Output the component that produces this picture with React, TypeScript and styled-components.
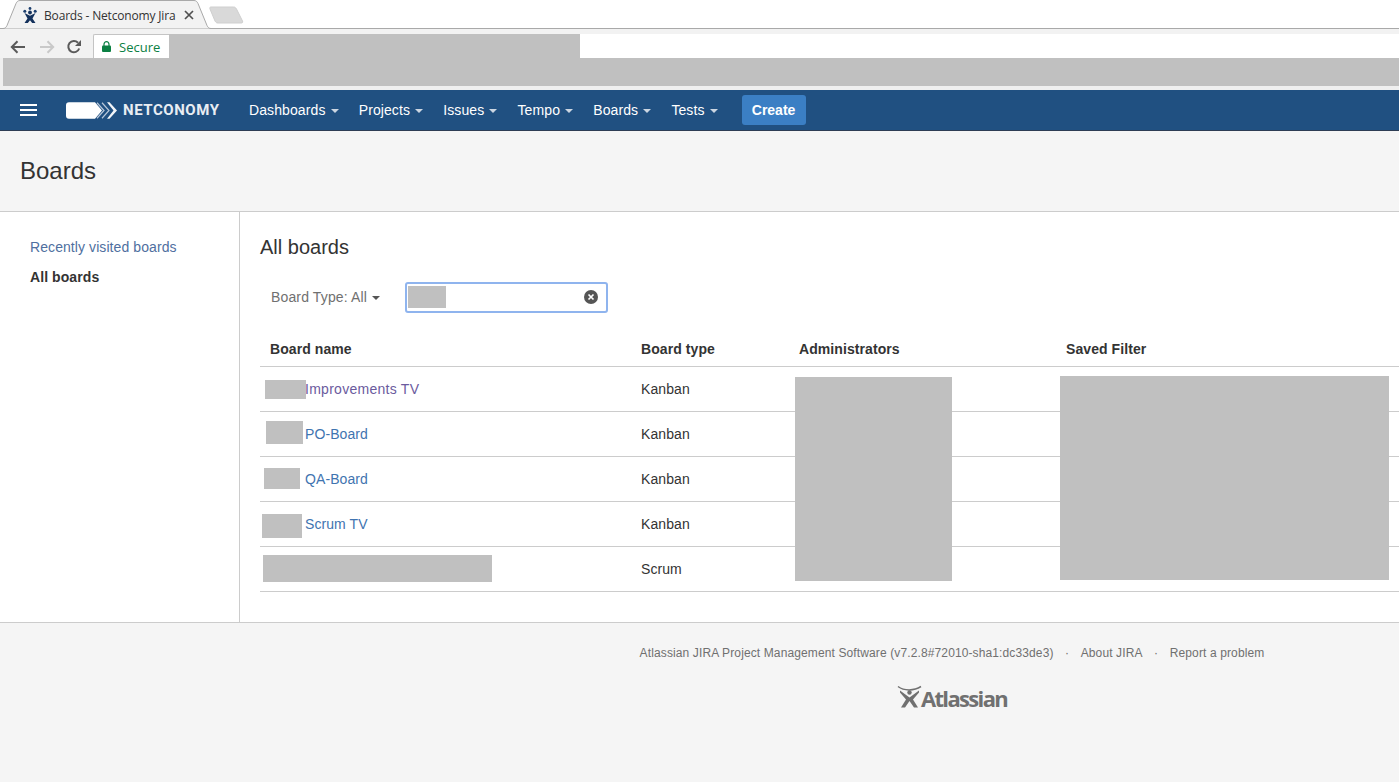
import React from "react";
import styled, { createGlobalStyle } from "styled-components";

const Global = createGlobalStyle`
  html, body { margin: 0; padding: 0; height: 100%; overflow: hidden; background: #fff; }
  body { font-family: "Liberation Sans", Arial, sans-serif; font-size: 14px; color: #333; }
  * { box-sizing: border-box; }
`;

const Page = styled.div`
  width: 1399px; height: 782px; display: flex; flex-direction: column; overflow: hidden;
`;

/* ---- browser chrome ---- */
const TabStrip = styled.div`
  height: 29px; background: #fff; border-bottom: 1px solid #a9a9a9; display: flex; align-items: flex-end; flex: none;
`;
const Tab = styled.div`
  position: relative; width: 212px; height: 29px; display: flex; align-items: center; padding: 1px 0 0 23px; font-family: "Open Sans", "Noto Sans", sans-serif; font-size: 12px; color: #333; margin-bottom: -1px; flex: none;
`;
const TabShape = styled.svg`
  position: absolute; left: 0; top: 0; z-index: 0;
`;
const TabIcon = styled.svg`
  position: relative; flex: none; margin-right: 7px;
`;
const TabTitle = styled.span`
  position: relative; white-space: nowrap; width: 140px; flex: none; letter-spacing: -0.17px;
`;
const TabClose = styled.svg`
  position: relative; flex: none;
`;
const NewTab = styled.svg`
  flex: none; margin: 0 0 4px -3px;
`;
const AddressRow = styled.div`
  height: 29px; background: #f2f2f2; display: flex; align-items: flex-end; flex: none;
`;
const NavIcons = styled.div`
  width: 93px; height: 29px; display: flex; align-items: center; gap: 9px; padding: 6px 0 0 9px; flex: none;
`;
const ReloadIcon = styled.svg`
  margin-left: 1px; flex: none;
`;
const SecureChip = styled.div`
  width: 76px; height: 24px; background: #fff; border: 1px solid #c4c4c4; border-bottom: 0; border-right: 0; border-radius: 2px 0 0 0; display: flex; align-items: center; gap: 8px; padding-left: 8px; color: #0b8043; font-family: "Open Sans", "Noto Sans", sans-serif; font-size: 13px; flex: none;
`;
const UrlRedaction = styled.div`
  width: 411px; height: 24px; background: #c0c0c0; flex: none;
`;
const UrlRest = styled.div`
  flex: 1; height: 24px; background: #fff;
`;
const BookmarkRow = styled.div`
  height: 32px; flex: none; background: #efefef; padding: 0 0 4px 3px;
`;
const BookmarkRedaction = styled.div`
  height: 28px; background: #c0c0c0;
`;

/* ---- jira header ---- */
const Header = styled.header`
  height: 41px; flex: none; background: #205081; border-bottom: 1px solid #2e3d54; display: flex; align-items: center; color: #fff;
`;
const Burger = styled.div`
  width: 17px; height: 12px; margin: 0 0 0 20px; border-top: 2px solid #fff; border-bottom: 2px solid #fff; position: relative; flex: none;
  &::after { content: ""; position: absolute; left: 0; right: 0; top: 3px; height: 2px; background: #fff; }
`;
const Brand = styled.div`
  display: flex; align-items: center; margin-left: 29px; width: 183px; flex: none;
`;
const BrandName = styled.span`
  margin-left: 6px; font-family: Roboto, "Liberation Sans", sans-serif; font-weight: 700; font-size: 15px; letter-spacing: 0.55px; color: #e8edf3;
`;
const NavList = styled.nav`
  display: flex; align-items: center; gap: 20.2px;
`;
const NavItem = styled.span`
  display: flex; align-items: center; gap: 5px; font-size: 14px; letter-spacing: 0.1px; color: #fff;
  &::after { content: ""; border-left: 4px solid transparent; border-right: 4px solid transparent; border-top: 4px solid #ccd6e2; margin-top: 1px; }
`;
const CreateButton = styled.button`
  margin-left: 24px; width: 64px; height: 30px; background: #3b7fc4; border: 0; border-radius: 3px; color: #fff; font: 700 14px "Liberation Sans", Arial, sans-serif; padding: 0;
`;

/* ---- page ---- */
const PageHead = styled.div`
  height: 81px; flex: none; background: #f5f5f5; border-bottom: 1px solid #ccc; display: flex; align-items: center; padding: 0 0 1px 20px;
`;
const PageTitle = styled.h1`
  margin: 0; font-size: 24px; font-weight: 400; color: #333;
`;
const Body = styled.div`
  display: flex; height: 411px; flex: none; border-bottom: 1px solid #ccc; letter-spacing: 0.08px;
`;
const Side = styled.aside`
  width: 240px; flex: none; border-right: 1px solid #ccc; padding: 28px 0 0 30px; display: flex; flex-direction: column; gap: 15px;
`;
const SideLink = styled.a<{ $active?: boolean }>`
  font-size: 14px; line-height: 15px; color: ${p => (p.$active ? "#333" : "#4f6fa0")}; font-weight: ${p => (p.$active ? 700 : 400)};
`;
const Main = styled.main`
  flex: 1; padding: 23px 0 0 20px; min-width: 0;
`;
const SectionTitle = styled.h2`
  margin: 0; font-size: 20px; line-height: 24px; font-weight: 400; letter-spacing: 0; color: #333;
`;
const Filters = styled.div`
  display: flex; align-items: center; height: 32px; margin-top: 22px; padding-left: 11px;
`;
const TypeFilter = styled.span`
  display: flex; align-items: center; gap: 5px; width: 134px; color: #707070; font-size: 14px; letter-spacing: 0.14px;
  &::after { content: ""; border-left: 4px solid transparent; border-right: 4px solid transparent; border-top: 4px solid #555; margin-top: 1px; }
`;
const SearchBox = styled.div`
  position: relative; width: 203px; height: 31px; border: 2px solid #8fb4ee; border-radius: 3px; background: #fff; display: flex; align-items: center; justify-content: flex-end; padding-right: 8px;
`;
const SearchRedaction = styled.div`
  position: absolute; left: 1px; top: 2px; width: 38px; height: 22px; background: #c0c0c0;
`;
const TableWrap = styled.div`
  position: relative; margin-top: 19px;
`;
const Row = styled.div<{ $head?: boolean }>`
  display: grid; grid-template-columns: 371px 158px 267px 1fr; height: ${p => (p.$head ? 35 : 45)}px; border-bottom: 1px solid #ccc; align-items: center; font-weight: ${p => (p.$head ? 700 : 400)}; color: #333;
`;
const Cell = styled.div`
  padding-left: 10px; position: relative; white-space: nowrap;
`;
const NameCell = styled(Cell)`
  padding-left: 45px;
`;
const BoardLink = styled.a<{ $visited?: boolean }>`
  color: ${p => (p.$visited ? "#6b5b9e" : "#3f74b0")};
  letter-spacing: ${p => (p.$visited ? 0.27 : 0.08)}px;
`;
const Redaction = styled.div<{ $l: number; $t: number; $w: number; $h: number }>`
  position: absolute; background: #c0c0c0; left: ${p => p.$l}px; top: ${p => p.$t}px; width: ${p => p.$w}px; height: ${p => p.$h}px;
`;

/* ---- footer ---- */
const Footer = styled.footer`
  flex: 1; background: #f5f5f5; display: flex; flex-direction: column; align-items: center; padding: 22px 0 0 505px; color: #707070; font-size: 12px;
`;
const FooterLinks = styled.div`
  display: flex; gap: 11.5px; line-height: 16px; letter-spacing: 0.12px;
  & > span { white-space: nowrap; }
`;
const AtlassianLogo = styled.div`
  display: flex; align-items: flex-end; margin-top: 21px; color: #707070; height: 28px;
`;
const AtlassianText = styled.span`
  font-family: "Open Sans", "Liberation Sans", sans-serif; font-weight: 700; font-size: 22px; line-height: 24px; letter-spacing: -1.65px; margin-left: -2px;
`;

const Back = ({ color, flip }: { color: string; flip?: boolean }) => (
  <svg width="19" height="16" viewBox="0 0 19 16" style={flip ? { transform: "scaleX(-1)" } : undefined}>
    <path d="M16 8H3M8.5 2.2 2.8 8l5.700 5.800" fill="none" stroke={color} strokeWidth="2" />
  </svg>
);

const boards = [
  { name: "Improvements TV", type: "Kanban", visited: true, r: { l: 5, t: -1, w: 41, h: 19 } },
  { name: "PO-Board", type: "Kanban", r: { l: 6, t: -5, w: 37, h: 23 } },
  { name: "QA-Board", type: "Kanban", r: { l: 4, t: -3, w: 36, h: 21 } },
  { name: "Scrum TV", type: "Kanban", r: { l: 2, t: -2, w: 40, h: 24 } },
  { name: "\u00a0", type: "Scrum", r: { l: 3, t: -6, w: 229, h: 27 } },
];

export default function App() {
  return (
    <Page>
      <Global />
      <TabStrip>
        <Tab>
          <TabShape width="212" height="29" viewBox="0 0 212 29">
            <path d="M0 28.500h3c2 0 3-1 4-3L16 3.500C17 1.500 18 .5 20 .5h174c2 0 3 1 4 3l9 22c1 2 2 3 4 3h1" fill="#f2f2f2" stroke="#a9a9a9" />
          </TabShape>
          <TabIcon width="14" height="16" viewBox="0 0 14 16">
            <circle cx="1.800" cy="4.200" r="1.500" fill="#1d3f6e" />
            <circle cx="12.200" cy="4.200" r="1.500" fill="#1d3f6e" />
            <circle cx="7" cy="1.500" r="1.400" fill="#1d3f6e" />
            <circle cx="7" cy="5.500" r="1.900" fill="#14315c" />
            <path d="M1.500 6 7 8.800 12.500 6 9.500 11.500 12.500 16H9.200L7 13.200 4.800 16H1.500l3-4.500z" fill="#14315c" />
          </TabIcon>
          <TabTitle>Boards - Netconomy Jira</TabTitle>
          <TabClose width="10" height="10" viewBox="0 0 10 10">
            <path d="M1 1l8 8M9 1L1 9" stroke="#505050" strokeWidth="1.700" />
          </TabClose>
        </Tab>
        <NewTab width="36" height="18" viewBox="0 0 36 18">
          <path d="M1.500 1h23c1.500 0 2 .5 3 2l6 12c.5 1.500 0 2-1.500 2H9c-1.500 0-2-.5-3-2L1 3c-.5-1 0-2 .5-2z" fill="#d9d9d9" stroke="#cfcfcf" />
        </NewTab>
      </TabStrip>
      <AddressRow>
        <NavIcons>
          <Back color="#5a5a5a" />
          <Back color="#c9c9c9" flip />
          <ReloadIcon width="16" height="16" viewBox="0 0 16 16">
            <path d="M13.200 9.500A5.600 5.600 0 1 1 12 3.800" fill="none" stroke="#5a5a5a" strokeWidth="2" />
            <path d="M15 1v6H9z" fill="#5a5a5a" />
          </ReloadIcon>
        </NavIcons>
        <SecureChip>
          <svg width="9" height="11" viewBox="0 0 9 11">
            <path d="M2 5V3.200a2.500 2.500 0 0 1 5 0V5" fill="none" stroke="#0b8043" strokeWidth="1.200" />
            <rect x="0" y="4.500" width="9" height="6.500" rx="1" fill="#0b8043" />
          </svg>
          Secure
        </SecureChip>
        <UrlRedaction />
        <UrlRest />
      </AddressRow>
      <BookmarkRow>
        <BookmarkRedaction />
      </BookmarkRow>
      <Header>
        <Burger />
        <Brand>
          <svg width="51" height="17" viewBox="0 0 51 17">
            <path d="M3 .25H29L36 8.500 29 16.750H3a3 3 0 0 1-3-3V3.250a3 3 0 0 1 3-3z" fill="#fff" />
            <path d="M31 .75 38 8.500 31 16.250M36 .75 43 8.500 36 16.250" fill="none" stroke="#b9c8da" strokeWidth="1.200" />
            <path d="M41 .25h2.500L51 8.500l-7.500 8.250H41l6.500-8.250z" fill="#f2f5f8" />
          </svg>
          <BrandName>NETCONOMY</BrandName>
        </Brand>
        <NavList>
          {["Dashboards", "Projects", "Issues", "Tempo", "Boards", "Tests"].map(n => (
            <NavItem key={n}>{n}</NavItem>
          ))}
        </NavList>
        <CreateButton>Create</CreateButton>
      </Header>
      <PageHead>
        <PageTitle>Boards</PageTitle>
      </PageHead>
      <Body>
        <Side>
          <SideLink>Recently visited boards</SideLink>
          <SideLink $active>All boards</SideLink>
        </Side>
        <Main>
          <SectionTitle>All boards</SectionTitle>
          <Filters>
            <TypeFilter>Board Type: All</TypeFilter>
            <SearchBox>
              <SearchRedaction />
              <svg width="14" height="14" viewBox="0 0 14 14">
                <circle cx="7" cy="7" r="7" fill="#555" />
                <path d="M4.500 4.500l5 5M9.500 4.500l-5 5" stroke="#fff" strokeWidth="1.700" />
              </svg>
            </SearchBox>
          </Filters>
          <TableWrap>
            <Row $head>
              <Cell>Board name</Cell>
              <Cell>Board type</Cell>
              <Cell>Administrators</Cell>
              <Cell>Saved Filter</Cell>
            </Row>
            {boards.map(b => (
              <Row key={b.type + b.name}>
                <NameCell>
                  <Redaction $l={b.r.l} $t={b.r.t} $w={b.r.w} $h={b.r.h} />
                  <BoardLink $visited={b.visited}>{b.name}</BoardLink>
                </NameCell>
                <Cell>{b.type}</Cell>
                <Cell />
                <Cell />
              </Row>
            ))}
            <Redaction $l={535} $t={45} $w={157} $h={204} />
            <Redaction $l={800} $t={44} $w={329} $h={204} />
          </TableWrap>
        </Main>
      </Body>
      <Footer>
        <FooterLinks>
          <span>Atlassian JIRA Project Management Software (v7.2.8#72010-sha1:dc33de3)</span>
          <span>·</span>
          <span>About JIRA</span>
          <span>·</span>
          <span>Report a problem</span>
        </FooterLinks>
        <AtlassianLogo>
          <svg width="26" height="26" viewBox="0 0 26 26">
            <path d="M1 2.500C7 7 17 7 24 2.500" fill="none" stroke="#707070" strokeWidth="1.500" />
            <circle cx="12.500" cy="8.500" r="2.200" fill="#707070" />
            <path d="M3 6.500l9.500 7 9.500-7v2l-6 7 5 8h-4l-4.500-6.500L8 23.500H4l5-8-6-7z" fill="#707070" />
          </svg>
          <AtlassianText>Atlassian</AtlassianText>
        </AtlassianLogo>
      </Footer>
    </Page>
  );
}
